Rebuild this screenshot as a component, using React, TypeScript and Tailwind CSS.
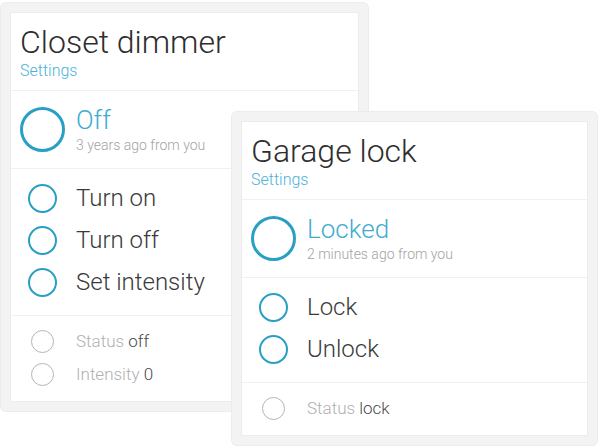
import React from 'react';

type Device = {
  name: string;
  state: string;
  when: string;
  actions: string[];
  info: { label: string; value: string }[];
  frame: string;
};

const devices: Device[] = [
  {
    name: 'Closet dimmer',
    state: 'Off',
    when: '3 years ago from you',
    actions: ['Turn on', 'Turn off', 'Set intensity'],
    info: [
      { label: 'Status', value: 'off' },
      { label: 'Intensity', value: '0' },
    ],
    frame: 'left-[1px] top-[3px] w-[367px]',
  },
  {
    name: 'Garage lock',
    state: 'Locked',
    when: '2 minutes ago from you',
    actions: ['Lock', 'Unlock'],
    info: [{ label: 'Status', value: 'lock' }],
    frame: 'left-[232px] top-[112px] w-[365px]',
  },
];

const DeviceCard: React.FC<{ d: Device }> = ({ d }) => (
  <div className={`absolute ${d.frame} rounded-[5px] bg-[#f3f3f3] p-[9px] shadow-[0_0_0_1px_#ececec]`}>
    <div className="bg-white border border-[#ececec]">
      {/* header */}
      <div className="h-[77px] px-[9px] pt-[10px]">
        <h2 className="text-[32px] leading-[38px] font-light text-[#2e2e2e]">{d.name}</h2>
        <a className="block text-[16px] leading-[20px] font-light text-[#4ab2d6]">Settings</a>
      </div>

      {/* current state */}
      <div className="h-[78px] border-t border-[#f0f0f0] px-[9px] flex items-center gap-[11px]">
        <div className="w-[45px] h-[45px] rounded-full border-[3px] border-[#2a9fc5] shrink-0" />
        <div className="flex flex-col">
          <span className="text-[26px] leading-[30px] font-light text-[#3fabd2]">{d.state}</span>
          <span className="text-[14px] leading-[18px] font-light text-[#a3a3a3] mt-[1px]">{d.when}</span>
        </div>
      </div>

      {/* actions */}
      <div className="border-t border-[#f0f0f0] px-[9px] pt-[8px] pb-[12px]">
        {d.actions.map((a) => (
          <div key={a} className="h-[42px] flex items-center gap-[11px]">
            <div className="w-[45px] flex justify-center">
              <div className="w-[29px] h-[29px] rounded-full border-2 border-[#2a9fc5]" />
            </div>
            <span className="text-[24px] font-light text-[#3a3a3a]">{a}</span>
          </div>
        ))}
      </div>

      {/* info */}
      <div className="border-t border-[#f0f0f0] px-[9px] pt-[9px] pb-[10px]">
        {d.info.map((i) => (
          <div key={i.label} className="h-[33px] flex items-center gap-[11px]">
            <div className="w-[45px] flex justify-center">
              <div className="w-[23px] h-[23px] rounded-full border border-[#b5b5b5]" />
            </div>
            <span className="text-[17px] font-light text-[#b0b0b0]">
              {i.label} <span className="text-[#4a4a4a]">{i.value}</span>
            </span>
          </div>
        ))}
      </div>
    </div>
  </div>
);

export default function App() {
  return (
    <div className="relative w-[602px] h-[447px] bg-white overflow-hidden font-['Roboto',_'Liberation_Sans',_sans-serif]">
      {devices.map((d) => (
        <DeviceCard key={d.name} d={d} />
      ))}
    </div>
  );
}
